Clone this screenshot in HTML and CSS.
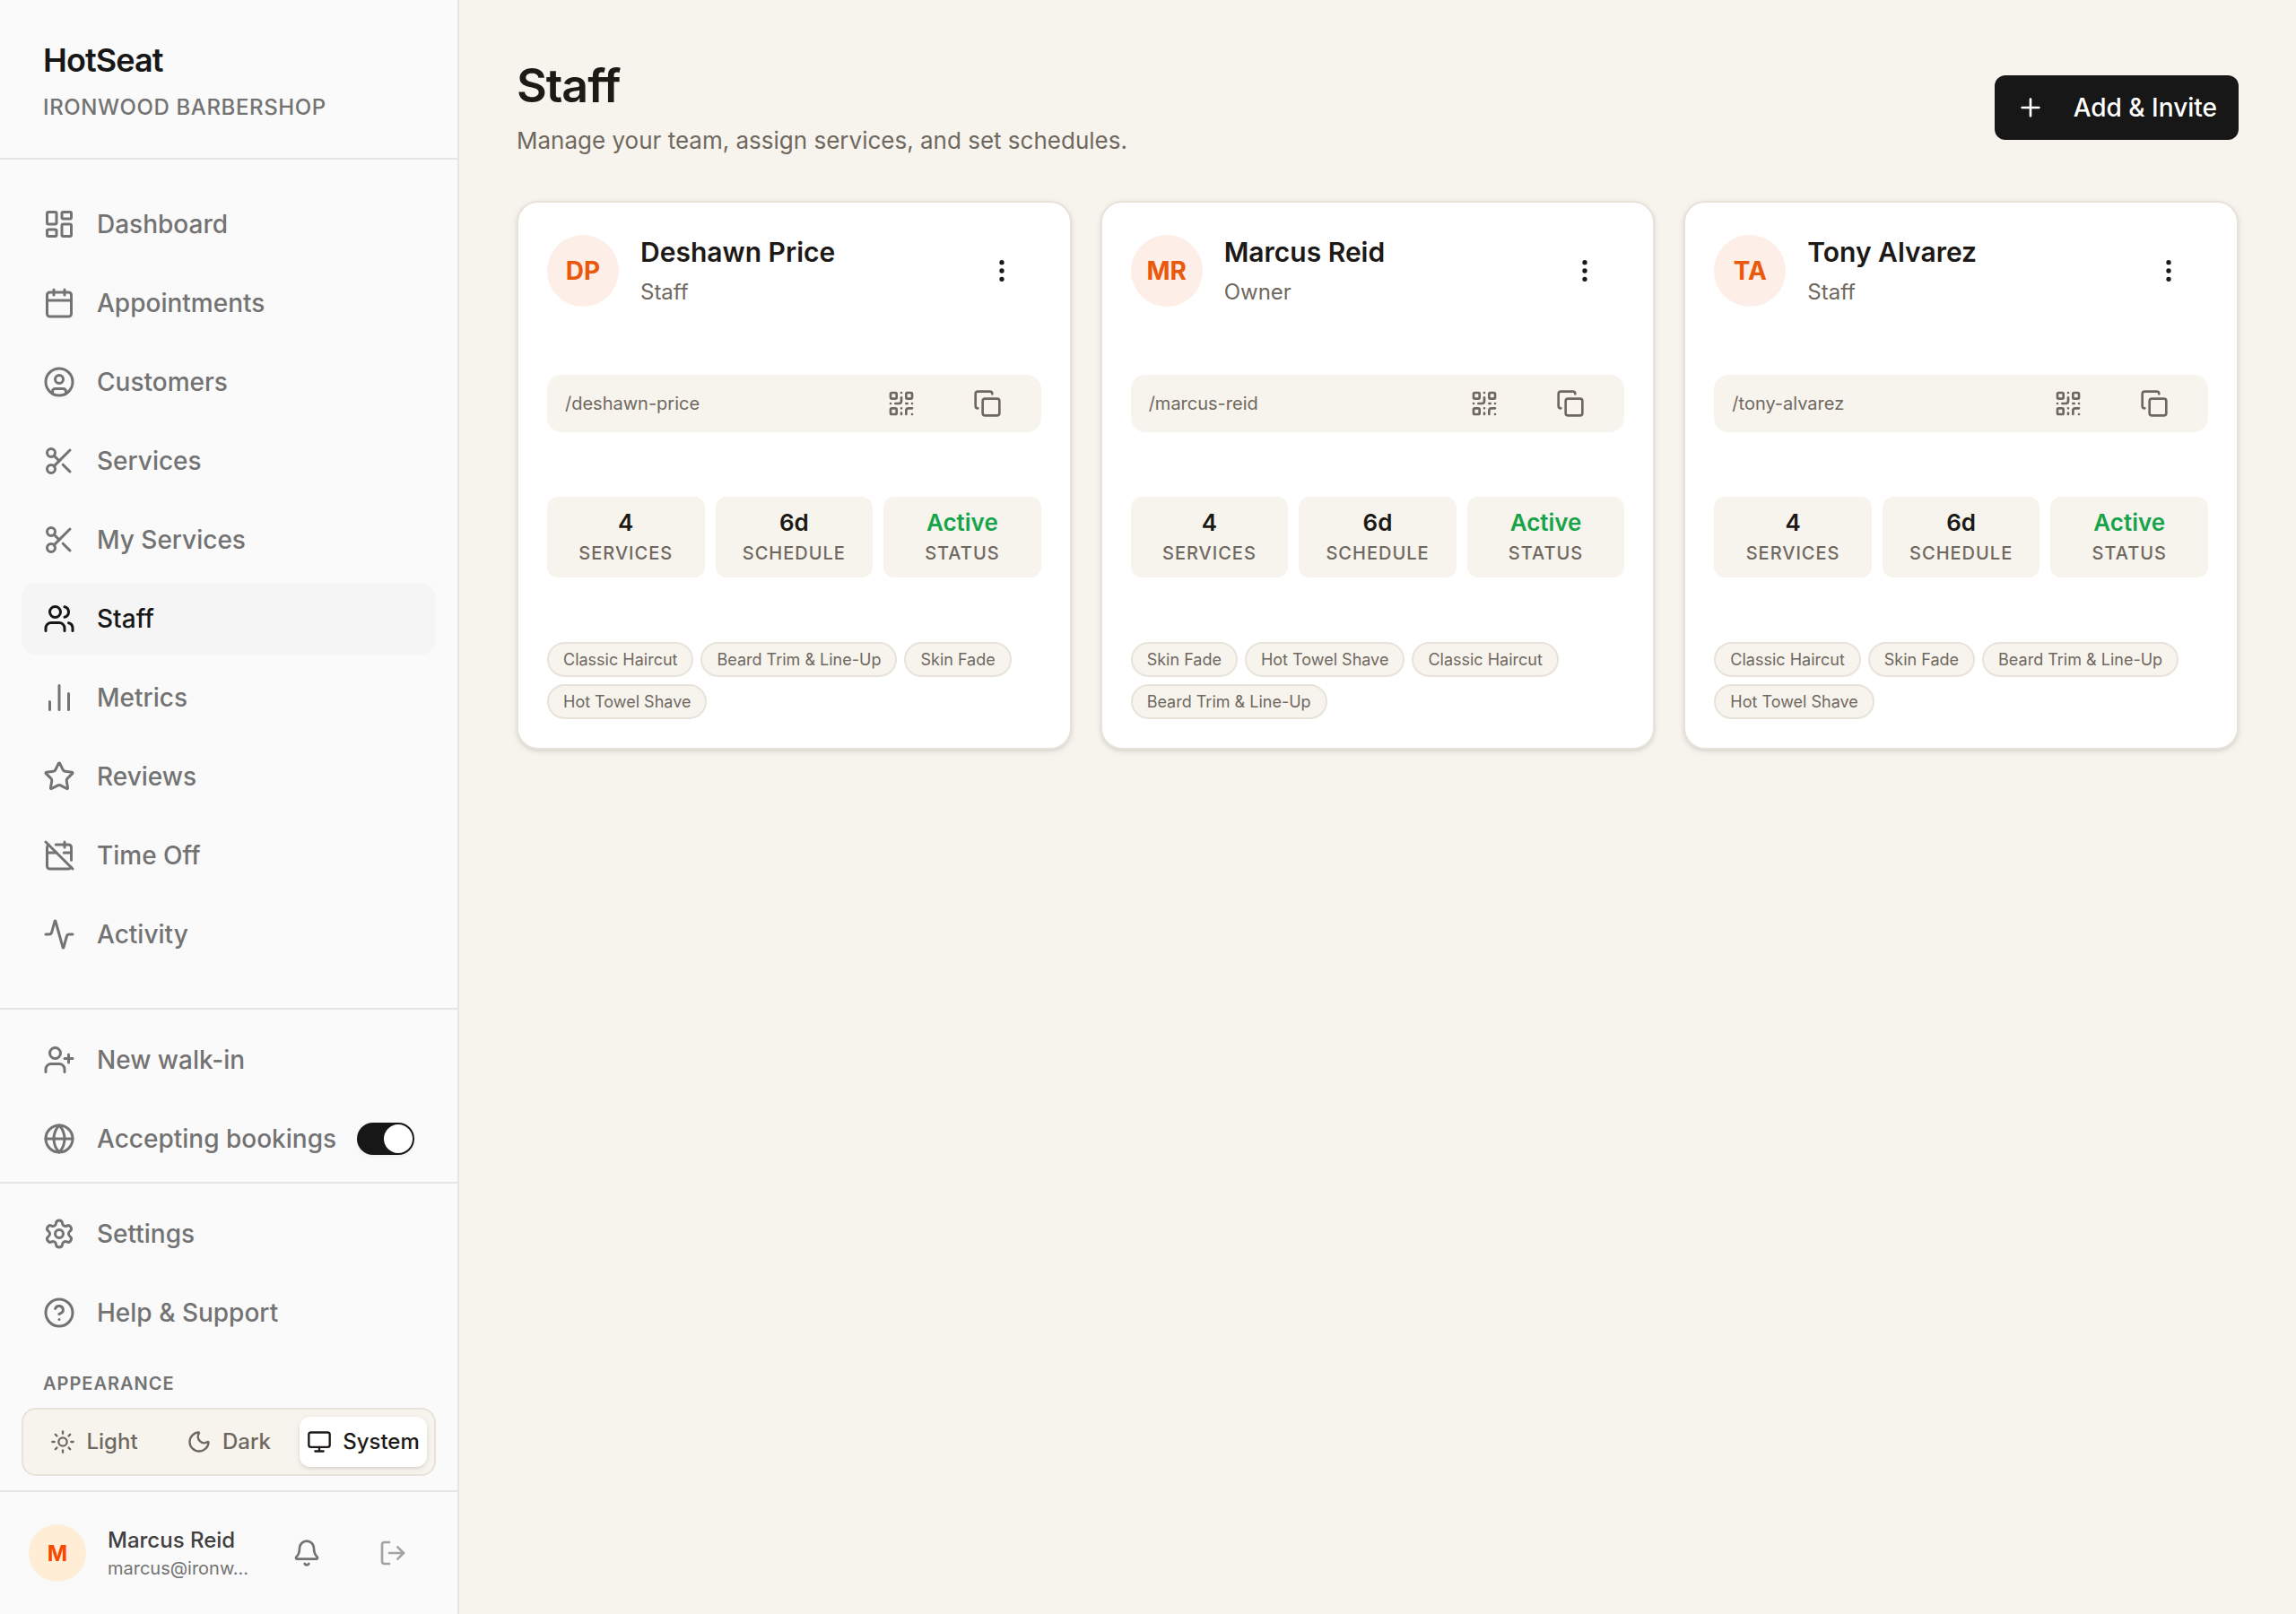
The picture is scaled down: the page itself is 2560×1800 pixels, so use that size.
FILE: index.html
```html
<!DOCTYPE html>
<html lang="en">
<head>
<meta charset="utf-8">
<meta name="viewport" content="width=device-width, initial-scale=1">
<title>Staff · HotSeat</title>
<link rel="stylesheet" href="styles.css">
</head>
<body>
<svg class="sprite" aria-hidden="true">
  <symbol id="i-dashboard" viewBox="0 0 24 24"><rect x="3" y="3" width="7" height="9" rx="1"/><rect x="14" y="3" width="7" height="5" rx="1"/><rect x="14" y="12" width="7" height="9" rx="1"/><rect x="3" y="16" width="7" height="5" rx="1"/></symbol>
  <symbol id="i-calendar" viewBox="0 0 24 24"><path d="M8 2v4M16 2v4"/><rect x="3" y="4" width="18" height="18" rx="2"/><path d="M3 10h18"/></symbol>
  <symbol id="i-customer" viewBox="0 0 24 24"><circle cx="12" cy="12" r="10"/><circle cx="12" cy="10" r="3"/><path d="M7 20.662V19a2 2 0 0 1 2-2h6a2 2 0 0 1 2 2v1.662"/></symbol>
  <symbol id="i-scissors" viewBox="0 0 24 24"><circle cx="6" cy="6" r="3"/><path d="M8.12 8.12 12 12"/><path d="M20 4 8.12 15.88"/><circle cx="6" cy="18" r="3"/><path d="M14.8 14.8 20 20"/></symbol>
  <symbol id="i-users" viewBox="0 0 24 24"><path d="M16 21v-2a4 4 0 0 0-4-4H6a4 4 0 0 0-4 4v2"/><path d="M16 3.128a4 4 0 0 1 0 7.744"/><path d="M22 21v-2a4 4 0 0 0-3-3.87"/><circle cx="9" cy="7" r="4"/></symbol>
  <symbol id="i-metrics" viewBox="0 0 24 24"><path d="M5 21v-6M12 21V3M19 21V9"/></symbol>
  <symbol id="i-star" viewBox="0 0 24 24"><path d="M11.525 2.295a.53.53 0 0 1 .95 0l2.31 4.679a2.123 2.123 0 0 0 1.595 1.16l5.166.756a.53.53 0 0 1 .294.904l-3.736 3.638a2.123 2.123 0 0 0-.611 1.878l.882 5.14a.53.53 0 0 1-.771.56l-4.618-2.428a2.122 2.122 0 0 0-1.973 0L6.396 21.01a.53.53 0 0 1-.77-.56l.881-5.139a2.122 2.122 0 0 0-.611-1.879L2.16 9.795a.53.53 0 0 1 .294-.906l5.165-.755a2.122 2.122 0 0 0 1.597-1.16z"/></symbol>
  <symbol id="i-calendar-off" viewBox="0 0 24 24"><path d="M4.2 4.2A2 2 0 0 0 3 6v14a2 2 0 0 0 2 2h14a2 2 0 0 0 1.82-1.18"/><path d="M21 15.5V6a2 2 0 0 0-2-2H9.5"/><path d="M16 2v4"/><path d="M3 10h7"/><path d="M21 10h-5.5"/><path d="m2 2 20 20"/></symbol>
  <symbol id="i-activity" viewBox="0 0 24 24"><path d="M22 12h-2.48a2 2 0 0 0-1.93 1.46l-2.35 8.36a.25.25 0 0 1-.48 0L9.24 2.18a.25.25 0 0 0-.48 0l-2.35 8.36A2 2 0 0 1 4.49 12H2"/></symbol>
  <symbol id="i-user-plus" viewBox="0 0 24 24"><path d="M16 21v-2a4 4 0 0 0-4-4H6a4 4 0 0 0-4 4v2"/><circle cx="9" cy="7" r="4"/><path d="M19 8v6M22 11h-6"/></symbol>
  <symbol id="i-globe" viewBox="0 0 24 24"><circle cx="12" cy="12" r="10"/><path d="M12 2a14.5 14.5 0 0 0 0 20 14.5 14.5 0 0 0 0-20"/><path d="M2 12h20"/></symbol>
  <symbol id="i-settings" viewBox="0 0 24 24"><path d="M9.671 4.136a2.34 2.34 0 0 1 4.659 0 2.34 2.34 0 0 0 3.319 1.915 2.34 2.34 0 0 1 2.33 4.033 2.34 2.34 0 0 0 0 3.831 2.34 2.34 0 0 1-2.33 4.033 2.34 2.34 0 0 0-3.319 1.915 2.34 2.34 0 0 1-4.659 0 2.34 2.34 0 0 0-3.32-1.915 2.34 2.34 0 0 1-2.33-4.033 2.34 2.34 0 0 0 0-3.831A2.34 2.34 0 0 1 6.35 6.051a2.34 2.34 0 0 0 3.319-1.915"/><circle cx="12" cy="12" r="3"/></symbol>
  <symbol id="i-help" viewBox="0 0 24 24"><circle cx="12" cy="12" r="10"/><path d="M9.09 9a3 3 0 0 1 5.83 1c0 2-3 3-3 3"/><path d="M12 17h.01"/></symbol>
  <symbol id="i-sun" viewBox="0 0 24 24"><circle cx="12" cy="12" r="4"/><path d="M12 2v2M12 20v2M4.93 4.93l1.41 1.41M17.66 17.66l1.41 1.41M2 12h2M20 12h2M6.34 17.66l-1.41 1.41M19.07 4.93l-1.41 1.41"/></symbol>
  <symbol id="i-moon" viewBox="0 0 24 24"><path d="M20.985 12.486a9 9 0 1 1-9.473-9.472c.405-.022.617.46.402.803a6 6 0 0 0 8.268 8.268c.344-.215.825-.004.803.401"/></symbol>
  <symbol id="i-monitor" viewBox="0 0 24 24"><rect x="2" y="3" width="20" height="14" rx="2"/><path d="M8 21h8M12 17v4"/></symbol>
  <symbol id="i-bell" viewBox="0 0 24 24"><path d="M10.268 21a2 2 0 0 0 3.464 0"/><path d="M3.262 15.326A1 1 0 0 0 4 17h16a1 1 0 0 0 .74-1.673C19.41 13.956 18 12.499 18 8A6 6 0 0 0 6 8c0 4.499-1.411 5.956-2.738 7.326"/></symbol>
  <symbol id="i-logout" viewBox="0 0 24 24"><path d="M9 21H5a2 2 0 0 1-2-2V5a2 2 0 0 1 2-2h4"/><path d="m16 17 5-5-5-5"/><path d="M21 12H9"/></symbol>
  <symbol id="i-plus" viewBox="0 0 24 24"><path d="M5 12h14M12 5v14"/></symbol>
  <symbol id="i-more" viewBox="0 0 24 24"><circle cx="12" cy="12" r="1"/><circle cx="12" cy="5" r="1"/><circle cx="12" cy="19" r="1"/></symbol>
  <symbol id="i-qr" viewBox="0 0 24 24"><rect x="3" y="3" width="5" height="5" rx="1"/><rect x="16" y="3" width="5" height="5" rx="1"/><rect x="3" y="16" width="5" height="5" rx="1"/><path d="M21 16h-3a2 2 0 0 0-2 2v3M21 21v.01M12 7v3a2 2 0 0 1-2 2H7M3 12h.01M12 3h.01M12 16v.01M16 12h1M21 12v.01M12 21v-1"/></symbol>
  <symbol id="i-copy" viewBox="0 0 24 24"><rect x="8" y="8" width="14" height="14" rx="2"/><path d="M4 16c-1.1 0-2-.9-2-2V4c0-1.1.9-2 2-2h10c1.1 0 2 .9 2 2"/></symbol>
</svg>

<div class="app">
  <aside class="sidebar">
    <header class="brand">
      <div class="brand-name">HotSeat</div>
      <div class="brand-shop">IRONWOOD BARBERSHOP</div>
    </header>

    <nav class="nav" aria-label="Main">
      <a class="nav-item" href="#dashboard"><svg class="icon"><use href="#i-dashboard"/></svg>Dashboard</a>
      <a class="nav-item" href="#appointments"><svg class="icon"><use href="#i-calendar"/></svg>Appointments</a>
      <a class="nav-item" href="#customers"><svg class="icon"><use href="#i-customer"/></svg>Customers</a>
      <a class="nav-item" href="#services"><svg class="icon"><use href="#i-scissors"/></svg>Services</a>
      <a class="nav-item" href="#my-services"><svg class="icon"><use href="#i-scissors"/></svg>My Services</a>
      <a class="nav-item is-active" href="#staff" aria-current="page"><svg class="icon"><use href="#i-users"/></svg>Staff</a>
      <a class="nav-item" href="#metrics"><svg class="icon"><use href="#i-metrics"/></svg>Metrics</a>
      <a class="nav-item" href="#reviews"><svg class="icon"><use href="#i-star"/></svg>Reviews</a>
      <a class="nav-item" href="#time-off"><svg class="icon"><use href="#i-calendar-off"/></svg>Time Off</a>
      <a class="nav-item" href="#activity"><svg class="icon"><use href="#i-activity"/></svg>Activity</a>
    </nav>

    <div class="section section-quick">
      <button class="nav-item" type="button"><svg class="icon"><use href="#i-user-plus"/></svg>New walk-in</button>
      <label class="nav-item"><svg class="icon"><use href="#i-globe"/></svg><span class="nav-label">Accepting bookings</span><input class="switch" type="checkbox" role="switch" checked></label>
    </div>

    <div class="section section-settings">
      <a class="nav-item" href="#settings"><svg class="icon"><use href="#i-settings"/></svg>Settings</a>
      <a class="nav-item" href="#help"><svg class="icon"><use href="#i-help"/></svg>Help &amp; Support</a>
      <fieldset class="appearance">
        <legend class="appearance-title">APPEARANCE</legend>
        <div class="segments">
          <label class="segment"><input class="segment-input" type="radio" name="theme"><svg class="icon icon-sm"><use href="#i-sun"/></svg>Light</label>
          <label class="segment"><input class="segment-input" type="radio" name="theme"><svg class="icon icon-sm"><use href="#i-moon"/></svg>Dark</label>
          <label class="segment"><input class="segment-input" type="radio" name="theme" checked><svg class="icon icon-sm"><use href="#i-monitor"/></svg>System</label>
        </div>
      </fieldset>
    </div>

    <footer class="account">
      <span class="account-avatar">M</span>
      <div class="account-text">
        <div class="account-name">Marcus Reid</div>
        <div class="account-email">marcus@ironw...</div>
      </div>
      <div class="account-actions">
        <button class="icon-button" type="button" aria-label="Notifications"><svg class="icon icon-md"><use href="#i-bell"/></svg></button>
        <button class="icon-button is-faint" type="button" aria-label="Log out"><svg class="icon icon-md"><use href="#i-logout"/></svg></button>
      </div>
    </footer>
  </aside>

  <main class="main">
    <header class="page-head">
      <div>
        <h1 class="page-title">Staff</h1>
        <p class="page-subtitle">Manage your team, assign services, and set schedules.</p>
      </div>
      <button class="add-button" type="button"><svg class="icon icon-md"><use href="#i-plus"/></svg>Add &amp; Invite</button>
    </header>

    <div class="cards">
      <article class="card">
        <div class="person">
          <span class="avatar">DP</span>
          <div class="person-text">
            <h2 class="person-name">Deshawn Price</h2>
            <p class="person-role">Staff</p>
          </div>
          <button class="icon-button is-dark" type="button" aria-label="More actions"><svg class="icon icon-md"><use href="#i-more"/></svg></button>
        </div>
        <div class="link-bar">
          <span class="link-path">/deshawn-price</span>
          <button class="bar-button" type="button" aria-label="Show QR code"><svg class="icon icon-md"><use href="#i-qr"/></svg></button>
          <button class="bar-button" type="button" aria-label="Copy link"><svg class="icon icon-md"><use href="#i-copy"/></svg></button>
        </div>
        <div class="stats">
          <div class="stat"><div class="stat-value">4</div><div class="stat-label">SERVICES</div></div>
          <div class="stat"><div class="stat-value">6d</div><div class="stat-label">SCHEDULE</div></div>
          <div class="stat"><div class="stat-value is-green">Active</div><div class="stat-label">STATUS</div></div>
        </div>
        <ul class="tags">
          <li class="tag">Classic Haircut</li>
          <li class="tag">Beard Trim &amp; Line-Up</li>
          <li class="tag">Skin Fade</li>
          <li class="tag">Hot Towel Shave</li>
        </ul>
      </article>

      <article class="card">
        <div class="person">
          <span class="avatar">MR</span>
          <div class="person-text">
            <h2 class="person-name">Marcus Reid</h2>
            <p class="person-role">Owner</p>
          </div>
          <button class="icon-button is-dark" type="button" aria-label="More actions"><svg class="icon icon-md"><use href="#i-more"/></svg></button>
        </div>
        <div class="link-bar">
          <span class="link-path">/marcus-reid</span>
          <button class="bar-button" type="button" aria-label="Show QR code"><svg class="icon icon-md"><use href="#i-qr"/></svg></button>
          <button class="bar-button" type="button" aria-label="Copy link"><svg class="icon icon-md"><use href="#i-copy"/></svg></button>
        </div>
        <div class="stats">
          <div class="stat"><div class="stat-value">4</div><div class="stat-label">SERVICES</div></div>
          <div class="stat"><div class="stat-value">6d</div><div class="stat-label">SCHEDULE</div></div>
          <div class="stat"><div class="stat-value is-green">Active</div><div class="stat-label">STATUS</div></div>
        </div>
        <ul class="tags">
          <li class="tag">Skin Fade</li>
          <li class="tag">Hot Towel Shave</li>
          <li class="tag">Classic Haircut</li>
          <li class="tag">Beard Trim &amp; Line-Up</li>
        </ul>
      </article>

      <article class="card">
        <div class="person">
          <span class="avatar">TA</span>
          <div class="person-text">
            <h2 class="person-name">Tony Alvarez</h2>
            <p class="person-role">Staff</p>
          </div>
          <button class="icon-button is-dark" type="button" aria-label="More actions"><svg class="icon icon-md"><use href="#i-more"/></svg></button>
        </div>
        <div class="link-bar">
          <span class="link-path">/tony-alvarez</span>
          <button class="bar-button" type="button" aria-label="Show QR code"><svg class="icon icon-md"><use href="#i-qr"/></svg></button>
          <button class="bar-button" type="button" aria-label="Copy link"><svg class="icon icon-md"><use href="#i-copy"/></svg></button>
        </div>
        <div class="stats">
          <div class="stat"><div class="stat-value">4</div><div class="stat-label">SERVICES</div></div>
          <div class="stat"><div class="stat-value">6d</div><div class="stat-label">SCHEDULE</div></div>
          <div class="stat"><div class="stat-value is-green">Active</div><div class="stat-label">STATUS</div></div>
        </div>
        <ul class="tags">
          <li class="tag">Classic Haircut</li>
          <li class="tag">Skin Fade</li>
          <li class="tag">Beard Trim &amp; Line-Up</li>
          <li class="tag">Hot Towel Shave</li>
        </ul>
      </article>
    </div>
  </main>
</div>
</body>
</html>
```
FILE: styles.css
```css
:root {
  --canvas: #f7f4ed;
  --canvas-line: #e7e3da;
  --ink: #1c1917;
  --ink-muted: #6f6860;
  --side: #fafafa;
  --side-line: #e5e5e5;
  --side-muted: #737373;
  --side-ink: #171717;
}

*, *::before, *::after { box-sizing: border-box; }

body {
  margin: 0;
  background: var(--canvas);
  color: var(--ink);
  font-family: Inter, "Liberation Sans", sans-serif;
  -webkit-font-smoothing: antialiased;
}

h1, h2, p, ul, fieldset, legend { margin: 0; padding: 0; border: 0; }
ul { list-style: none; }
button { margin: 0; padding: 0; border: 0; background: none; color: inherit; font: inherit; cursor: pointer; }
a { color: inherit; text-decoration: none; }

.sprite { display: none; }

.icon {
  flex: none;
  width: 36px;
  height: 36px;
  fill: none;
  stroke: currentColor;
  stroke-width: 2;
  stroke-linecap: round;
  stroke-linejoin: round;
}
.icon-md { width: 32px; height: 32px; }
.icon-sm { width: 28px; height: 28px; }

.app { display: flex; min-height: 100vh; }

/* Sidebar */
.sidebar {
  display: flex;
  flex: none;
  flex-direction: column;
  width: 512px;
  background: var(--side);
  border-right: 2px solid var(--side-line);
  color: var(--side-muted);
}

.brand {
  padding: 40px 48px;
  border-bottom: 2px solid var(--side-line);
}
.brand-name {
  color: var(--side-ink);
  font-size: 36px;
  font-weight: 600;
  line-height: 54px;
  letter-spacing: -0.025em;
}
.brand-shop {
  margin-top: 10px;
  font-size: 24px;
  font-weight: 500;
  line-height: 32px;
  letter-spacing: 0.025em;
}

.nav {
  display: flex;
  flex: 1;
  flex-direction: column;
  gap: 8px;
  padding: 32px 24px 40px;
}
.nav-item {
  display: flex;
  align-items: center;
  gap: 24px;
  height: 80px;
  padding: 0 24px;
  border-radius: 16px;
  font-size: 28px;
  font-weight: 500;
  line-height: 40px;
  cursor: pointer;
}
.nav-item.is-active { background: #f5f5f5; color: var(--side-ink); }
.nav-label { flex: 1; min-width: 0; white-space: nowrap; }

.section {
  display: flex;
  flex-direction: column;
  gap: 8px;
  border-top: 2px solid var(--side-line);
}
.section-quick { padding: 16px 24px 8px; }
.section-settings { padding: 16px 24px; }

.switch {
  flex: none;
  display: flex;
  align-items: center;
  justify-content: flex-end;
  width: 64px;
  height: 36px;
  margin: 0;
  padding: 2px;
  appearance: none;
  border-radius: 18px;
  background: var(--side-ink);
  box-shadow: 0 2px 4px rgba(0, 0, 0, 0.05);
  cursor: pointer;
}
.switch::before {
  content: "";
  width: 32px;
  height: 32px;
  border-radius: 50%;
  background: #fff;
}
.switch:not(:checked) { justify-content: flex-start; background: var(--side-line); }

.appearance { min-width: 0; margin-top: 16px; padding-top: 12px; }
.appearance-title {
  padding: 0 24px;
  font-size: 20px;
  font-weight: 600;
  line-height: 30px;
  letter-spacing: 0.05em;
}
.segments {
  display: grid;
  grid-template-columns: repeat(3, minmax(0, 1fr));
  gap: 8px;
  padding: 8px;
  border: 2px solid var(--canvas-line);
  border-radius: 16px;
  background: var(--canvas);
}
.segment {
  display: flex;
  align-items: center;
  justify-content: center;
  gap: 12px;
  height: 56px;
  border-radius: 12px;
  color: var(--ink-muted);
  font-size: 24px;
  font-weight: 500;
  line-height: 32px;
  cursor: pointer;
}
.segment:has(:checked) {
  background: #fff;
  color: var(--ink);
  box-shadow: 0 2px 6px rgba(0, 0, 0, 0.1), 0 2px 4px -2px rgba(0, 0, 0, 0.1);
}
.segment-input { position: absolute; opacity: 0; pointer-events: none; }

.account {
  display: flex;
  align-items: center;
  gap: 24px;
  padding: 24px 28px 24px 32px;
  border-top: 2px solid var(--side-line);
}
.account-avatar {
  display: grid;
  flex: none;
  place-items: center;
  width: 64px;
  height: 64px;
  border-radius: 50%;
  background: #ffedd5;
  color: #f54900;
  font-size: 24px;
  font-weight: 700;
}
.account-text { flex: 1; min-width: 0; }
.account-name { color: #404040; font-size: 24px; font-weight: 500; line-height: 34px; }
.account-email {
  overflow: hidden;
  font-size: 20px;
  line-height: 28px;
  text-overflow: ellipsis;
  white-space: nowrap;
}
.account-actions { display: flex; gap: 8px; margin-left: -8px; }

.icon-button {
  display: grid;
  flex: none;
  place-items: center;
  width: 88px;
  height: 88px;
  border-radius: 12px;
}
.icon-button.is-faint { color: #a3a3a3; }
.icon-button.is-dark { color: var(--ink); }

/* Page */
.main { flex: 1; min-width: 0; padding: 64px; }

.page-head {
  display: flex;
  align-items: center;
  justify-content: space-between;
  gap: 32px;
  margin-bottom: 48px;
}
.page-title {
  font-size: 52px;
  font-weight: 600;
  line-height: 64px;
  letter-spacing: -0.02em;
}
.page-subtitle { margin-top: 10px; color: var(--ink-muted); font-size: 26px; line-height: 38px; }

.add-button {
  display: flex;
  align-items: center;
  gap: 32px;
  height: 72px;
  padding: 0 24px;
  border-radius: 12px;
  background: var(--side-ink);
  color: #fff;
  font-size: 28px;
  font-weight: 500;
  white-space: nowrap;
}

.cards {
  display: grid;
  grid-template-columns: repeat(3, minmax(0, 1fr));
  gap: 32px;
}
.card {
  display: flex;
  flex-direction: column;
  gap: 72px;
  padding: 32px;
  border: 2px solid var(--canvas-line);
  border-radius: 24px;
  background: #fff;
  box-shadow: 0 2px 6px rgba(0, 0, 0, 0.1), 0 2px 4px -2px rgba(0, 0, 0, 0.1);
}

.person { display: flex; align-items: center; gap: 24px; }
.avatar {
  display: grid;
  flex: none;
  place-items: center;
  width: 80px;
  height: 80px;
  border-radius: 50%;
  background: #fdeee7;
  color: #ea580c;
  font-size: 28px;
  font-weight: 700;
}
.person-text { flex: 1; min-width: 0; }
.person-name { font-size: 30px; font-weight: 600; line-height: 42px; }
.person-role { margin-top: 6px; color: var(--ink-muted); font-size: 24px; line-height: 36px; }

.link-bar {
  display: flex;
  align-items: center;
  gap: 8px;
  height: 64px;
  padding: 0 16px 0 20px;
  border-radius: 16px;
  background: var(--canvas);
  color: var(--ink-muted);
}
.link-path { flex: 1; min-width: 0; font-size: 20px; line-height: 30px; }
.bar-button { display: grid; place-items: center; width: 88px; height: 64px; }

.stats {
  display: grid;
  grid-template-columns: repeat(3, minmax(0, 1fr));
  gap: 12px;
}
.stat {
  padding: 12px 8px;
  border-radius: 12px;
  background: var(--canvas);
  text-align: center;
}
.stat-value { font-size: 26px; font-weight: 600; line-height: 34px; }
.stat-value.is-green { color: #16a34a; }
.stat-label {
  margin-top: 2px;
  color: var(--ink-muted);
  font-size: 20px;
  font-weight: 500;
  line-height: 30px;
  letter-spacing: 0.05em;
}

.tags { display: flex; flex-wrap: wrap; gap: 8px; }
.tag {
  padding: 4px 16px;
  border: 2px solid var(--canvas-line);
  border-radius: 20px;
  background: var(--canvas);
  color: var(--ink-muted);
  font-size: 18px;
  line-height: 27px;
}
```
